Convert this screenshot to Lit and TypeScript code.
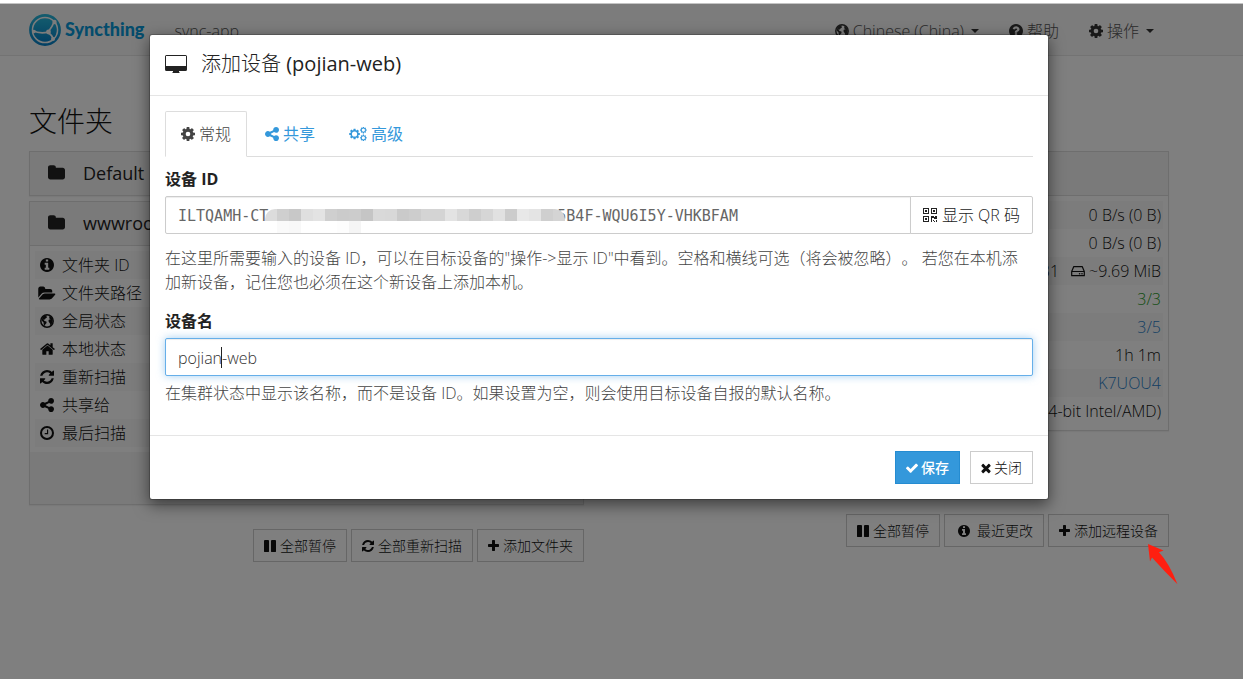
import { LitElement, html, css, svg, nothing } from "lit";
import { customElement, property, state } from "lit/decorators.js";

const COG_RIM = "M1664 787v222q0 12-8 23t-20 13l-185 28q-19 54-39 91 35 50 107 138 10 12 10 25t-9 23q-27 37-99 108t-94 71q-12 0-26-9l-138-108q-44 23-91 38-16 136-29 186-7 28-36 28h-222q-14 0-24.500-8.500t-11.500-21.500l-28-184q-49-16-90-37l-141 107q-10 9-25 9-14 0-25-11-126-114-165-168-7-10-7-23 0-12 8-23 15-21 51-66.500t54-70.500q-27-50-41-99l-183-27q-13-2-21-12.500t-8-23.500v-222q0-12 8-23t19-13l186-28q14-46 39-92-40-57-107-138-10-12-10-24 0-10 9-23 26-36 98.500-107.500t94.500-71.500q13 0 26 10l138 107q44-23 91-38 16-136 29-186 7-28 36-28h222q14 0 24.500 8.500t11.500 21.500l28 184q49 16 90 37l142-107q9-9 24-9 13 0 25 10 129 119 165 170 7 8 7 22 0 12-8 23-15 21-51 66.500t-54 70.500q26 50 41 98l183 28q13 2 21 12.500t8 23.500z";
const COG = "M1152 896a256 256 0 1 0-512 0 256 256 0 1 0 512 0z" + COG_RIM;
const COG_THIN = "M1270 896a374 374 0 1 0-748 0 374 374 0 1 0 748 0z" + COG_RIM;

/** Glyph outlines; box is the visible part of the drawing grid. */
const GLYPHS: Record<string, { box: string; ratio: number; body: unknown }> = {
  cog: { box: "128 128 1536 1536", ratio: 1, body: svg`<path fill-rule="evenodd" d=${COG} />` },
  cogs: {
    box: "0 0 1920 1536", ratio: 1.25,
    body: svg`<g transform="translate(-100 88) scale(.76)"><path fill-rule="evenodd" d=${COG_THIN} /></g>
      <g transform="translate(1130 -80) scale(.47)"><path fill-rule="evenodd" d=${COG_THIN} /></g>
      <g transform="translate(1130 770) scale(.47)"><path fill-rule="evenodd" d=${COG_THIN} /></g>`,
  },
  share: { box: "128 128 1536 1536", ratio: 1, body: svg`<path d="M1344 1024q133 0 226.500 93.500t93.500 226.500-93.500 226.500-226.500 93.500-226.500-93.500-93.500-226.500q0-12 2-34l-360-180q-92 86-218 86-133 0-226.500-93.500t-93.500-226.500 93.500-226.500 226.500-93.500q126 0 218 86l360-180q-2-22-2-34 0-133 93.500-226.500t226.500-93.500 226.500 93.500 93.500 226.500-93.500 226.500-226.500 93.500q-126 0-218-86l-360 180q2 22 2 34t-2 34l360 180q92-86 218-86z" />` },
  info: { box: "128 128 1536 1536", ratio: 1, body: svg`<path fill-rule="evenodd" d="M1152 1376v-160q0-14-9-23t-23-9h-96v-512q0-14-9-23t-23-9h-320q-14 0-23 9t-9 23v160q0 14 9 23t23 9h96v320h-96q-14 0-23 9t-9 23v160q0 14 9 23t23 9h448q14 0 23-9t9-23zm-128-896v-160q0-14-9-23t-23-9h-192q-14 0-23 9t-9 23v160q0 14 9 23t23 9h192q14 0 23-9t9-23zm640 416q0 209-103 385.500t-279.500 279.500-385.500 103-385.500-103-279.500-279.500-103-385.500 103-385.500 279.500-279.500 385.500-103 385.500 103 279.500 279.500 103 385.500z" />` },
  question: { box: "128 128 1536 1536", ratio: 1, body: svg`<path fill-rule="evenodd" d="M1024 1376v-192q0-14-9-23t-23-9h-192q-14 0-23 9t-9 23v192q0 14 9 23t23 9h192q14 0 23-9t9-23zm256-672q0-88-55.500-163t-138.500-116-170-41q-243 0-371 213-15 24 8 42l132 100q7 6 19 6 16 0 25-12 53-68 86-92 34-24 86-24 48 0 85.500 26t37.500 59q0 38-20 61t-68 45q-63 28-115.500 86.500t-52.500 125.500v36q0 14 9 23t23 9h192q14 0 23-9t9-23q0-19 21.500-49.500t54.500-49.500q32-18 49-28.500t46-35 44.500-48 28-60.500 12.500-81zm384 192q0 209-103 385.500t-279.500 279.500-385.500 103-385.500-103-279.500-279.500-103-385.500 103-385.500 279.500-279.500 385.500-103 385.500 103 279.500 279.500 103 385.500z" />` },
  folder: { box: "64 128 1664 1536", ratio: 1.0833, body: svg`<path d="M1728 608v704q0 92-66 158t-158 66h-1216q-92 0-158-66t-66-158v-960q0-92 66-158t158-66h320q92 0 158 66t66 158v32h672q92 0 158 66t66 158z" />` },
  folderOpen: { box: "0 64 1920 1536", ratio: 1.25, body: svg`<path d="M1879 952q0 31-31 66l-336 396q-43 51-120.500 86.500t-143.500 35.500h-1088q-34 0-60.500-13t-26.500-43q0-31 31-66l336-396q43-51 120.500-86.500t143.500-35.500h1088q34 0 60.500 13t26.500 43zm-343-344v160h-832q-94 0-197 47.500t-164 119.500l-337 396-5 6q0-4-.5-12.500t-.5-12.500v-960q0-92 66-158t158-66h320q92 0 158 66t66 158v32h544q92 0 158 66t66 158z" />` },
  home: { box: "64 128 1664 1536", ratio: 1.0833, body: svg`<path d="M1472 992v480q0 26-19 45t-45 19h-384v-384h-256v384h-384q-26 0-45-19t-19-45v-480q0-1 .5-3t.5-3l575-474 575 474q1 2 1 6zm223-69l-62 74q-8 9-21 11h-3q-13 0-21-7l-692-577-692 577q-12 8-24 7-13-2-21-11l-62-74q-8-10-7-23.500t11-21.500l719-599q32-26 76-26t76 26l244 204v-195q0-14 9-23t23-9h192q14 0 23 9t9 23v408l219 182q10 8 11 21.500t-7 23.500z" />` },
  refresh: { box: "128 128 1536 1536", ratio: 1, body: svg`<path d="M1639 1056q0 5-1 7-64 268-268 434.500t-478 166.500q-146 0-282.500-55t-243.500-157l-129 129q-19 19-45 19t-45-19-19-45v-448q0-26 19-45t45-19h448q26 0 45 19t19 45-19 45l-137 137q71 66 161 102t187 36q134 0 250-65t186-179q11-17 53-117 8-23 30-23h192q13 0 22.500 9.500t9.500 22.500zm25-800v448q0 26-19 45t-45 19h-448q-26 0-45-19t-19-45 19-45l138-138q-148-137-349-137-134 0-250 65t-186 179q-11 17-53 117-8 23-30 23h-199q-13 0-22.500-9.500t-9.500-22.500v-7q65-268 270-434.500t480-166.500q146 0 284 55.500t245 156.500l130-129q19-19 45-19t45 19 19 45z" />` },
  clock: { box: "128 128 1536 1536", ratio: 1, body: svg`<circle cx="896" cy="896" r="656" fill="none" stroke="currentColor" stroke-width="224" /><path d="M1024 544v448q0 32-32 32h-320q-32 0-32-32v-64q0-32 32-32h224v-352q0-32 32-32h64q32 0 32 32z" />` },
  pause: { box: "128 128 1536 1536", ratio: 1, body: svg`<rect x="128" y="128" width="640" height="1536" rx="60" /><rect x="1024" y="128" width="640" height="1536" rx="60" />` },
  plus: { box: "192 128 1408 1536", ratio: 0.9167, body: svg`<path d="M1600 736v192q0 40-28 68t-68 28h-416v416q0 40-28 68t-68 28h-192q-40 0-68-28t-28-68v-416h-416q-40 0-68-28t-28-68v-192q0-40 28-68t68-28h416v-416q0-40 28-68t68-28h192q40 0 68 28t28 68v416h416q40 0 68 28t28 68z" />` },
  check: { box: "121 128 1550 1536", ratio: 1, body: svg`<path d="M1671 566q0 40-28 68l-724 724-136 136q-28 28-68 28t-68-28l-136-136-362-362q-28-28-28-68t28-68l136-136q28-28 68-28t68 28l294 295 656-657q28-28 68-28t68 28l136 136q28 28 28 68z" />` },
  times: { box: "256 128 1280 1536", ratio: 0.8333, body: svg`<path d="M1490 1322q0 40-28 68l-136 136q-28 28-68 28t-68-28l-294-294-294 294q-28 28-68 28t-68-28l-136-136q-28-28-28-68t28-68l294-294-294-294q-28-28-28-68t28-68l136-136q28-28 68-28t68 28l294 294 294-294q28-28 68-28t68 28l136 136q28 28 28 68t-28 68l-294 294 294 294q28 28 28 68z" />` },
  globe: {
    box: "0 0 14 14", ratio: 1,
    body: svg`<circle cx="7" cy="7" r="6.200" fill="none" stroke="currentColor" stroke-width="1.500" />
      <path d="M2.600 3 5 1.600 7.400 1.400 6.400 2.600 7 3.600 5.400 4.400 5 5.600 3.400 5.400 4.600 7 6.400 7.600 6.600 9 5.200 10.600 5 12.400 3.600 10.200 3.600 8.600 1.600 6.600z" />
      <path d="M9.400 2 11.600 3.400 12.800 6 12.400 9 10.400 11.600 10 9.600 9.200 8.400 8.400 7 9 5.600 10.600 5.400 9.200 4.200z" />`,
  },
  disk: {
    box: "0 0 14 14", ratio: 1,
    body: svg`<path d="M.7 7.500 2.800 2.600h8.400l2.100 4.900v4.200H.7z M.7 7.500h12.600" fill="none" stroke="currentColor" stroke-width="1.200" stroke-linejoin="round" /><circle cx="8.600" cy="9.700" r=".8" /><circle cx="11" cy="9.700" r=".8" />`,
  },
  qr: {
    box: "0 0 14 14", ratio: 1,
    body: svg`<path fill-rule="evenodd" d="M0 0h6v6H0zM1 1v4h4V1zM2 2h2v2H2zM8 0h6v6H8zM9 1v4h4V1zM10 2h2v2h-2zM0 8h6v6H0zM1 9v4h4V9zM2 10h2v2H2zM8 8h3v1h1V8h2v3h-3v-1H9v4H8zM10 12h1v1h-1zM11 13h1v1h-1zM13 12h1v2h-1z" />`,
  },
  desktop: {
    box: "0 0 22 18", ratio: 1.2222,
    body: svg`<path fill-rule="evenodd" d="M1.500 0h19Q22 0 22 1.500v13q0 1.500-1.500 1.500H14v1l1 1H7l1-1v-1H1.500Q0 16 0 14.500v-13Q0 0 1.500 0zM1 1v10h20V1z" />`,
  },
};

@customElement("st-icon")
export class StIcon extends LitElement {
  @property() name = "cog";
  @property({ type: Number }) size = 14;

  static styles = css`
    :host { display: inline-flex; flex: none; align-items: center; justify-content: center; }
    .glyph { display: block; fill: currentColor; }
  `;

  render() {
    const g = GLYPHS[this.name];
    return g
      ? html`<svg class="glyph" aria-hidden="true" height=${this.size} width=${Math.round(this.size * g.ratio)} viewBox=${g.box}>${g.body}</svg>`
      : nothing;
  }
}

const FOLDER_ROWS = [
  ["info", "文件夹 ID"],
  ["folderOpen", "文件夹路径"],
  ["globe", "全局状态"],
  ["home", "本地状态"],
  ["refresh", "重新扫描"],
  ["share", "共享给"],
  ["clock", "最后扫描"],
];

const DEVICE_ROWS = [
  { label: "下载速率", value: "0 B/s (0 B)", tone: "" },
  { label: "上传速率", value: "0 B/s (0 B)", tone: "" },
  { label: "本地状态", value: "~9.69 MiB", tone: "disk" },
  { label: "侦听程序", value: "3/3", tone: "green" },
  { label: "设备发现", value: "3/5", tone: "blue" },
  { label: "运行时间", value: "1h 1m", tone: "" },
  { label: "标识", value: "K7UOU4", tone: "blue" },
  { label: "版本", value: "Linux (64-bit Intel/AMD)", tone: "" },
];

/** Shades of the redaction tiles laid over the middle of the device ID. */
const TILES = ["dcdcdc", "cfcfcf", "c8c8c8", "dfdfdf", "e3e3e3", "cfcfcf", "cbcbcb", "cccccc", "c5c5c5", "d9d9d9", "d8d8d8", "cacaca", "cdcdcd", "d4d4d4", "d4d4d4", "e3e3e3", "d8d8d8", "cecece", "d6d6d6", "e1e1e1", "cccccc", "e8e8e8", "e4e4e4", "cfcfcf", "d4d4d4"];
const LOW_TILES = ["ffffff", "fafafa", "f8f8f8", "ffffff", "ffffff", "ffffff", "fdfdfd", "f5f5f5", "ffffff"];

@customElement("app-root")
export class AppRoot extends LitElement {
  @state() private deviceId = "ILTQAMH-CT" + " ".repeat(32) + "5B4F-WQU6I5Y-VHKBFAM";
  @state() private deviceName = "pojian-web";

  static styles = css`
    :host {
      display: flex;
      flex-direction: column;
      min-height: 100vh;
      font: 16px/24px "Open Sans", "Noto Sans CJK SC", sans-serif;
      font-weight: 300;
      color: #111;
      background: #fff;
      text-spacing-trim: space-all;
    }
    *, *::before, *::after { box-sizing: border-box; }
    h3, h4, p { margin: 0; font-weight: inherit; }
    a { color: inherit; text-decoration: none; }
    button, input { font: inherit; color: inherit; }

    .strip { height: 4px; background: #fff; border-bottom: 1px solid #c4c4c4; }
    .frame { position: relative; flex: 1; }
    .container { max-width: 1170px; margin: 0 auto; padding: 0 15px; }
    .gutter { padding-right: 45px; }

    .navbar { background: #f8f8f8; border-bottom: 1px solid #e7e7e7; }
    .nav { display: flex; align-items: center; height: 51px; color: #555; }
    .brand { display: flex; align-items: center; gap: 4px; font: 900 18px/24px "Lato", sans-serif; color: #0898d8; }
    .brand svg { display: block; }
    .brand span { padding-bottom: 2px; }
    .host-name { margin: 2px auto 0 30px; }
    .menu { display: flex; gap: 30px; margin: 2px 15px 0 0; }
    .menu a { display: flex; align-items: center; gap: 4px; }
    .menu st-icon { color: #333; }
    .caret { border: 4px solid transparent; border-top-color: #333; border-bottom: 0; margin-left: 3px; }

    .columns { display: grid; grid-template-columns: 1fr 1fr; gap: 30px; padding-top: 45px; }
    .heading { font-size: 28px; line-height: 40px; margin-bottom: 10px; }
    .panel { border: 1px solid #ddd; box-shadow: 0 1px 1px rgba(0, 0, 0, 0.05); margin-bottom: 5px; }
    .panel-head { display: flex; align-items: center; gap: 18px; height: 43px; padding: 0 18px 2px; background: #f5f5f5; font-size: 18px; font-weight: 400; color: #222; }
    .panel-body { padding: 5px; border-top: 1px solid #ddd; }
    .panel-foot { height: 52px; background: #f5f5f5; }
    .facts { width: 100%; border-collapse: collapse; }
    .facts tr:nth-child(odd) { background: #f9f9f9; }
    .facts th, .facts td { height: 28px; padding: 2px; text-align: left; font-weight: inherit; white-space: nowrap; }
    .facts td { text-align: right; }
    .fact { display: flex; align-items: center; gap: 5px; }
    .fact-icon { display: flex; justify-content: center; width: 20px; }
    .pair { display: inline-flex; align-items: center; gap: 4px; }
    .pair st-icon { margin-left: 8px; }
    .green { color: #1d991d; }
    .blue { color: #2a80c8; }

    .actions { display: flex; justify-content: flex-end; gap: 4px; margin-top: 24px; }
    .actions.near { margin-top: 83px; }
    .btn { display: inline-flex; align-items: center; justify-content: center; gap: 4px; height: 33px; padding: 0 10px; font-size: 14px; line-height: 20px; background: #fff; border: 1px solid #ccc; white-space: nowrap; }
    .btn.wide { padding: 0 10px 0 13px; gap: 7px; }
    .btn.primary { background: #3498db; border-color: #258cd1; color: #fff; font-weight: 500; }
    .pointed { position: relative; display: flex; }
    .arrow { position: absolute; z-index: 20; top: 29px; right: -9px; }

    .backdrop { position: absolute; z-index: 10; inset: 0; background: rgba(0, 0, 0, 0.5); padding-top: 30px; }
    .modal { width: min(900px, 100%); margin: 0 auto; background: #fff; background-clip: padding-box; border: 1px solid rgba(0, 0, 0, 0.2); border-radius: 3px; box-shadow: 0 5px 15px rgba(0, 0, 0, 0.5); }
    .modal-head { display: flex; align-items: center; gap: 14px; height: 61px; padding: 0 15px 2px; border-bottom: 1px solid #e5e5e5; font-size: 20px; color: #222; }
    .device { font-weight: 400; }
    .modal-body { padding: 15px; }
    .tabs { display: flex; gap: 2px; border-bottom: 1px solid #ddd; margin-bottom: 10px; }
    .tab { display: flex; align-items: center; gap: 4px; height: 46px; margin-bottom: -1px; padding: 0 15px; border: 1px solid transparent; border-radius: 2px 2px 0 0; background: none; color: #3498db; font-weight: 400; }
    .tab.active { background: #fff; color: #444; border-color: #ddd #ddd #fff; font-weight: 300; }
    .group { margin-bottom: 15px; }
    .label { display: block; margin-bottom: 5px; font-weight: 700; color: #222; }
    .field { position: relative; display: flex; }
    .input { flex: 1; min-width: 0; height: 38px; padding: 2px 12px 0; border: 1px solid #ccc; border-radius: 2px; background: #fff; color: #333; box-shadow: inset 0 1px 1px rgba(0, 0, 0, 0.075); outline: 0; }
    .input.mono { font: 15px/24px "DejaVu Sans Mono", monospace; color: #666; border-radius: 2px 0 0 2px; }
    .input.focus { border-color: #66afe9; caret-color: transparent; box-shadow: inset 0 1px 1px rgba(0, 0, 0, 0.075), 0 0 8px rgba(102, 175, 233, 0.6); }
    .addon { display: inline-flex; align-items: center; gap: 5px; padding: 0 12px; margin-left: -1px; border: 1px solid #ccc; border-radius: 0 2px 2px 0; background: #fff; color: #222; white-space: nowrap; }
    .tiles { position: absolute; top: 13px; left: 100px; }
    .row { display: flex; }
    .row.top { border-radius: 10px 10px 0 0; overflow: hidden; }
    .tile { width: 12px; height: 12px; }
    .cursor { position: absolute; top: 9px; left: 56px; width: 1px; height: 21px; background: #222; }
    .help { color: #444; margin-top: 5px; }
    .help.far { margin-top: 12px; }
    .modal-foot { display: flex; justify-content: flex-end; gap: 10px; padding: 15px; border-top: 1px solid #e5e5e5; }
    .modal-foot .btn { gap: 3px; }
  `;

  private renderLogo() {
    return html`<svg width="32" height="32" viewBox="0 0 32 32" aria-hidden="true">
      <defs><linearGradient id="tone" x1="0" y1="0" x2="0" y2="1"><stop offset="0" stop-color="#26b6db" /><stop offset="1" stop-color="#0882c8" /></linearGradient></defs>
      <circle cx="16" cy="16" r="14.600" fill="none" stroke="url(#tone)" stroke-width="2.600" />
      <circle cx="16" cy="16" r="11.800" fill="url(#tone)" />
      <g fill="none" stroke="#f8f8f8" stroke-width="1.700">
        <path d="M19 18.200C13 19.600 8 18.800 3.500 16.500M19 18.200C22 14.500 24 11 25.500 7M19 18.200C21.500 20 23 22 24.500 25" />
      </g>
      <circle cx="19.500" cy="18" r="2.400" fill="#f8f8f8" />
      <circle cx="25.500" cy="8" r="2.200" fill="#f8f8f8" />
      <circle cx="24" cy="25" r="2" fill="#f8f8f8" />
      <circle cx="5" cy="17.500" r="1.800" fill="#f8f8f8" />
    </svg>`;
  }

  private renderPage() {
    return html`
      <header class="navbar gutter">
        <nav class="container nav">
          <a class="brand" href="#">${this.renderLogo()}<span>Syncthing</span></a>
          <span class="host-name">sync-app</span>
          <div class="menu">
            <a href="#language"><st-icon name="globe"></st-icon>Chinese (China)<span class="caret"></span></a>
            <a href="#help"><st-icon name="question"></st-icon>帮助</a>
            <a href="#actions"><st-icon name="cog"></st-icon>操作<span class="caret"></span></a>
          </div>
        </nav>
      </header>
      <main class="gutter">
        <div class="container columns">
          <section>
            <h3 class="heading">文件夹</h3>
            <div class="panel"><div class="panel-head"><st-icon name="folder" size="16"></st-icon>Default Folder</div></div>
            <div class="panel">
              <div class="panel-head"><st-icon name="folder" size="16"></st-icon>wwwroot</div>
              <div class="panel-body">
                <table class="facts">
                  ${FOLDER_ROWS.map(([icon, text]) => html`<tr><th scope="row"><span class="fact"><span class="fact-icon"><st-icon name=${icon}></st-icon></span>${text}</span></th></tr>`)}
                </table>
              </div>
              <div class="panel-foot"></div>
            </div>
            <div class="actions">
              <button class="btn"><st-icon name="pause" size="12"></st-icon>全部暂停</button>
              <button class="btn"><st-icon name="refresh" size="12"></st-icon>全部重新扫描</button>
              <button class="btn"><st-icon name="plus" size="12"></st-icon>添加文件夹</button>
            </div>
          </section>
          <section>
            <h3 class="heading">当前设备</h3>
            <div class="panel">
              <div class="panel-head"><st-icon name="desktop" size="16"></st-icon>sync-app</div>
              <div class="panel-body">
                <table class="facts">
                  ${DEVICE_ROWS.map((r) => html`<tr><th scope="row">${r.label}</th>
                    <td>${r.tone === "disk"
                      ? html`<span class="pair">31 <st-icon name="disk"></st-icon>${r.value}</span>`
                      : html`<span class=${r.tone}>${r.value}</span>`}</td></tr>`)}
                </table>
              </div>
            </div>
            <div class="actions near">
              <button class="btn"><st-icon name="pause" size="12"></st-icon>全部暂停</button>
              <button class="btn wide"><st-icon name="info" size="12"></st-icon>最近更改</button>
              <div class="pointed">
                <button class="btn"><st-icon name="plus" size="12"></st-icon>添加远程设备</button>
                <svg class="arrow" width="31" height="42" viewBox="0 0 31 42" aria-hidden="true"><path fill="#ff1f10" d="M1 1 16.500 7.500 12 9.300Q22 20 30.500 41.200 18 29 5 14.500L3 18.500z" /></svg>
              </div>
            </div>
          </section>
        </div>
      </main>
    `;
  }

  private renderTiles(shades: string[]) {
    return shades.map((shade) => html`<span class="tile" style="background:#${shade}"></span>`);
  }

  private renderDialog() {
    return html`
      <div class="backdrop gutter">
        <div class="modal" role="dialog" aria-modal="true" aria-labelledby="title">
          <div class="modal-head"><st-icon name="desktop" size="18"></st-icon><h4 id="title">添加设备 <span class="device">(${this.deviceName})</span></h4></div>
          <div class="modal-body">
            <div class="tabs" role="tablist">
              <button class="tab active" role="tab" aria-selected="true"><st-icon name="cog"></st-icon>常规</button>
              <button class="tab" role="tab"><st-icon name="share"></st-icon>共享</button>
              <button class="tab" role="tab"><st-icon name="cogs"></st-icon>高级</button>
            </div>
            <div class="group">
              <label class="label" for="device-id">设备 ID</label>
              <div class="field">
                <input class="input mono" id="device-id" type="text" .value=${this.deviceId}
                  @input=${(e: InputEvent) => (this.deviceId = (e.target as HTMLInputElement).value)} />
                <button class="addon"><st-icon name="qr"></st-icon>显示 QR 码</button>
                <div class="tiles">
                  <div class="row top">${this.renderTiles(TILES)}</div>
                  <div class="row">${this.renderTiles(LOW_TILES)}</div>
                </div>
              </div>
              <p class="help far">在这里所需要输入的设备 ID，可以在目标设备的"操作-&gt;显示 ID"中看到。空格和横线可选（将会被忽略）。 若您在本机添加新设备，记住您也必须在这个新设备上添加本机。</p>
            </div>
            <div class="group">
              <label class="label" for="device-name">设备名</label>
              <div class="field">
                <input class="input focus" id="device-name" type="text" .value=${this.deviceName}
                  @input=${(e: InputEvent) => (this.deviceName = (e.target as HTMLInputElement).value)} />
                <span class="cursor"></span>
              </div>
              <p class="help">在集群状态中显示该名称，而不是设备 ID。如果设置为空，则会使用目标设备自报的默认名称。</p>
            </div>
          </div>
          <div class="modal-foot">
            <button class="btn primary"><st-icon name="check" size="12"></st-icon>保存</button>
            <button class="btn"><st-icon name="times" size="12"></st-icon>关闭</button>
          </div>
        </div>
      </div>
    `;
  }

  render() {
    return html`<div class="strip"></div><div class="frame">${this.renderPage()}${this.renderDialog()}</div>`;
  }
}
